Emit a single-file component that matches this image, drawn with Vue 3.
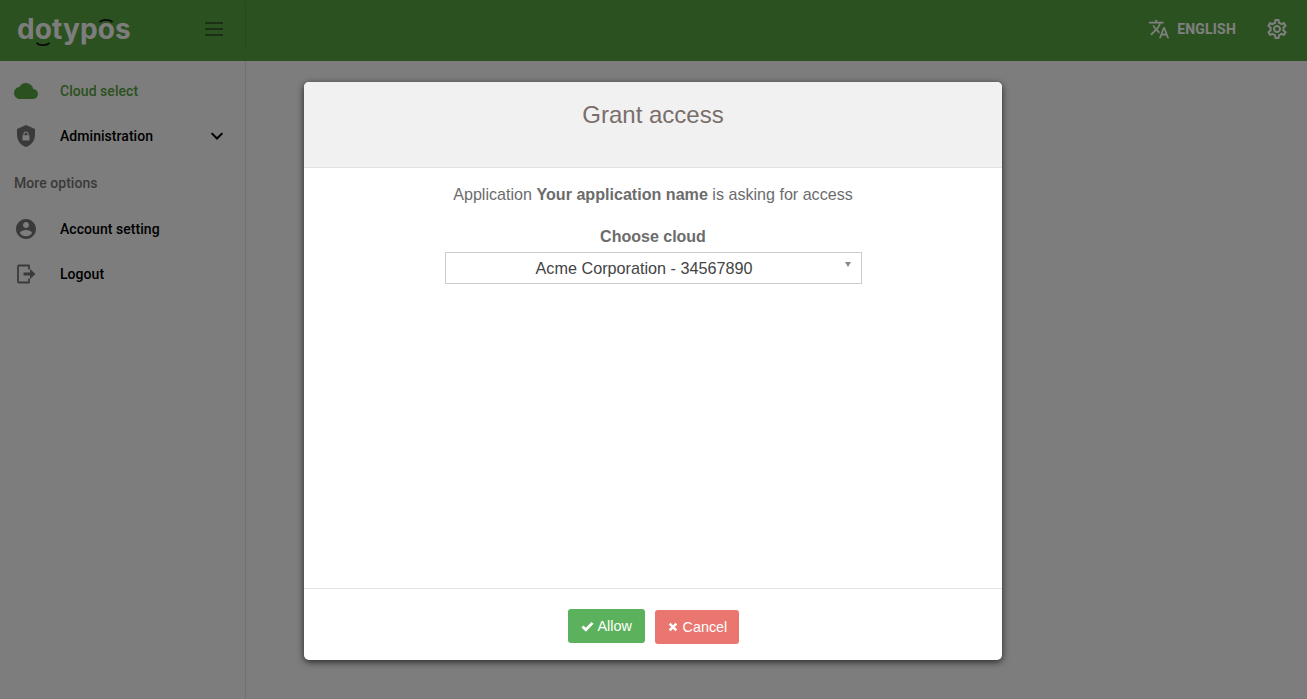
<template>
  <div class="app">
    <header class="topbar">
      <div class="brand">
        <span class="logo">d<span class="o low">o<svg viewBox="0 0 14 5" width="14" height="5"><path fill="none" stroke="#111" stroke-width="1.7" d="M.5 .8C3 4 11 4 13.500 .8"/></svg></span>typ<span class="o high">o<svg viewBox="0 0 14 5" width="14" height="5"><path fill="none" stroke="#111" stroke-width="1.7" d="M.5 4.200C3 1 11 1 13.500 4.200"/></svg></span>s</span>
      </div>
      <button class="menu" aria-label="menu"><span></span><span></span><span></span></button>
      <div class="divider"></div>
      <div class="spacer"></div>
      <div class="lang">
        <svg viewBox="0 0 24 24" width="22" height="22"><path fill="currentColor" d="M12.87 15.07l-2.54-2.51.03-.03A17.52 17.52 0 0 0 14.07 6H17V4h-7V2H8v2H1v2h11.17C11.5 7.92 10.44 9.75 9 11.35 8.07 10.32 7.3 9.19 6.69 8h-2c.73 1.63 1.73 3.17 2.98 4.56l-5.09 5.02L4 19l5-5 3.11 3.11.76-2.04zM18.5 10h-2L12 22h2l1.12-3h4.75L21 22h2l-4.5-12zm-2.62 7l1.62-4.33L19.12 17h-3.24z"/></svg>
        <span>ENGLISH</span>
      </div>
      <svg class="gear" viewBox="0 0 24 24" width="24" height="24"><path fill="currentColor" d="M19.43 12.98c.04-.32.07-.64.07-.98s-.03-.66-.07-.98l2.11-1.65c.19-.15.24-.42.12-.64l-2-3.46c-.12-.22-.39-.3-.61-.22l-2.49 1c-.52-.4-1.08-.73-1.69-.98l-.38-2.65A.488.488 0 0 0 14 2h-4c-.25 0-.46.18-.49.42l-.38 2.65c-.61.25-1.17.59-1.69.98l-2.49-1a.566.566 0 0 0-.18-.03c-.17 0-.34.09-.43.25l-2 3.46c-.13.22-.07.49.12.64l2.11 1.65c-.04.32-.07.65-.07.98s.03.66.07.98l-2.11 1.65c-.19.15-.24.42-.12.64l2 3.46c.12.22.39.3.61.22l2.49-1c.52.4 1.08.73 1.69.98l.38 2.65c.03.24.24.42.49.42h4c.25 0 .46-.18.49-.42l.38-2.65c.61-.25 1.17-.59 1.69-.98l2.49 1c.06.02.12.03.18.03.17 0 .34-.09.43-.25l2-3.46c.12-.22.07-.49-.12-.64l-2.11-1.65zm-1.98-1.71c.04.31.05.52.05.73 0 .21-.02.43-.05.73l-.14 1.13.89.7 1.08.84-.7 1.21-1.27-.51-1.04-.42-.9.68c-.43.32-.84.56-1.25.73l-1.06.43-.16 1.13-.2 1.35h-1.4l-.19-1.35-.16-1.13-1.06-.43c-.43-.18-.83-.41-1.23-.71l-.91-.7-1.06.43-1.27.51-.7-1.21 1.08-.84.89-.7-.14-1.13c-.03-.31-.05-.54-.05-.74s.02-.43.05-.73l.14-1.13-.89-.7-1.08-.84.7-1.21 1.27.51 1.04.42.9-.68c.43-.32.84-.56 1.25-.73l1.06-.43.16-1.13.2-1.35h1.39l.19 1.35.16 1.13 1.06.43c.43.18.83.41 1.23.71l.91.7 1.06-.43 1.27-.51.7 1.21-1.07.85-.89.7.14 1.13zM12 8c-2.21 0-4 1.79-4 4s1.79 4 4 4 4-1.79 4-4-1.79-4-4-4zm0 6c-1.1 0-2-.9-2-2s.9-2 2-2 2 .9 2 2-.9 2-2 2z"/></svg>
    </header>

    <div class="body">
      <aside class="sidebar">
        <div class="item active">
          <svg viewBox="0 0 24 24" class="ico cloud"><path fill="currentColor" d="M19.35 10.04A7.49 7.49 0 0 0 12 4C9.11 4 6.6 5.64 5.35 8.04A5.994 5.994 0 0 0 0 14c0 3.31 2.69 6 6 6h13c2.76 0 5-2.24 5-5 0-2.64-2.05-4.78-4.65-4.96z"/></svg>
          <span>Cloud select</span>
        </div>
        <div class="item">
          <svg viewBox="0 0 24 24" class="ico"><path fill="currentColor" fill-rule="evenodd" d="M12 1L3 5v6c0 5.550 3.840 10.740 9 12 5.160-1.260 9-6.450 9-12V5l-9-4zm3.500 15.500h-7v-5.200h.9v-1.200a2.600 2.600 0 0 1 5.200 0v1.200h.9v5.200zm-2-5.200v-1.200a1.500 1.500 0 0 0-3 0v1.200h3z"/></svg>
          <span>Administration</span>
          <svg class="chev" viewBox="0 0 24 24" width="20" height="20"><path fill="none" stroke="currentColor" stroke-width="2.4" d="M5.500 8.500l6.500 6.500 6.500-6.500"/></svg>
        </div>
        <div class="section">More options</div>
        <div class="item">
          <svg viewBox="0 0 24 24" class="ico"><path fill="currentColor" d="M12 2C6.480 2 2 6.480 2 12s4.480 10 10 10 10-4.480 10-10S17.520 2 12 2zm0 3c1.660 0 3 1.340 3 3s-1.340 3-3 3-3-1.340-3-3 1.340-3 3-3zm0 14.200a7.200 7.200 0 0 1-6-3.220c.03-1.990 4-3.080 6-3.080s5.970 1.090 6 3.080a7.200 7.200 0 0 1-6 3.220z"/></svg>
          <span>Account setting</span>
        </div>
        <div class="item">
          <svg viewBox="0 0 24 24" class="ico"><path fill="none" stroke="currentColor" stroke-width="1.800" stroke-linejoin="round" d="M15 7.500V3.500H5a1 1 0 0 0-1 1v15a1 1 0 0 0 1 1h10v-4"/><path fill="currentColor" d="M9.500 10.500H16V7l5.500 5-5.500 5v-3.500H9.500z"/></svg>
          <span>Logout</span>
        </div>
      </aside>
      <main class="content"></main>
    </div>

    <div class="backdrop">
      <section class="modal">
        <div class="modal-head"><h1>Grant access</h1></div>
        <div class="modal-body">
          <p class="intro">Application <b>Your application name</b> is asking for access</p>
          <div class="label">Choose cloud</div>
          <div class="select">Acme Corporation - 34567890<i class="caret"></i></div>
        </div>
        <div class="modal-foot">
          <button class="btn allow">
            <svg viewBox="0 0 14 12" width="13" height="11"><path fill="none" stroke="currentColor" stroke-width="3" d="M1.500 6l3.700 3.600L12.500 2"/></svg>
            Allow
          </button>
          <button class="btn cancel">
            <svg viewBox="0 0 12 12" width="10" height="10"><path fill="none" stroke="currentColor" stroke-width="3" d="M2 2l8 8M10 2l-8 8"/></svg>
            Cancel
          </button>
        </div>
      </section>
    </div>
  </div>
</template>

<script setup>
</script>

<style>
html, body { margin: 0; height: 100%; overflow: hidden; }
</style>

<style scoped>
.app { position: relative; width: 1307px; height: 699px; overflow: hidden; background: #fafafa; font-family: Roboto, sans-serif; }
.topbar { height: 61px; background: #56a240; color: #fff; display: flex; align-items: center; box-sizing: border-box; padding-bottom: 4px; }
.brand { width: 205px; padding-left: 17px; box-sizing: border-box; flex: none; }
.logo { font-family: Inter, sans-serif; font-weight: 700; font-size: 28px; letter-spacing: 0.1px; line-height: 36px; display: block; color: #fbfbfb; }
.o { position: relative; }
.o svg { position: absolute; left: 1.500px; }
.o.low svg { top: 30px; }
.o.high svg { top: 6px; }
.menu { width: 18px; height: 14px; padding: 0; border: 0; background: none; display: flex; flex-direction: column; justify-content: space-between; flex: none; }
.menu span { display: block; width: 18px; height: 2px; background: #111; opacity: .45; }
.divider { width: 1px; height: 48px; margin: -6px 0 0 22px; background: rgba(0,0,0,.08); flex: none; }
.spacer { flex: 1; }
.lang { display: flex; align-items: center; gap: 7px; font-size: 14px; font-weight: 700; letter-spacing: .2px; margin-right: 29px; }
.gear { margin-right: 18px; }
.body { display: flex; height: 638px; }
.sidebar { width: 246px; flex: none; box-sizing: border-box; border-right: 1px solid rgba(0,0,0,.1); padding-top: 7px; }
.item { height: 45px; display: flex; align-items: center; font-size: 14px; font-weight: 500; letter-spacing: .05px; color: #000; padding-left: 14px; box-sizing: border-box; position: relative; }
.ico { width: 24px; height: 24px; margin-right: 22px; color: #757575; flex: none; }
.ico.cloud { color: #56a240; }
.item.active { color: #56a240; }
.chev { position: absolute; left: 207px; top: 13px; color: #000; }
.section { font-size: 14px; font-weight: 500; letter-spacing: .05px; color: #757575; padding-left: 14px; height: 48px; line-height: 50px; }
.content { flex: 1; }
.backdrop { position: absolute; inset: 0; background: rgba(0,0,0,.5); display: flex; justify-content: center; padding: 82px 1px 0 0; box-sizing: border-box; }
.modal { width: 698px; height: 578px; background: #fff; border-radius: 5px; box-shadow: 0 2px 7px rgba(0,0,0,.7); display: flex; flex-direction: column; font-family: "Liberation Sans", Arial, sans-serif; overflow: hidden; }
.modal-head { height: 86px; background: #f1f1f1; border-bottom: 1px solid #e2e2e2; flex: none; box-sizing: border-box; }
.modal-head h1 { margin: 0; padding-top: 19px; font-size: 24px; line-height: 28px; font-weight: 400; text-align: center; color: #7a6e6b; }
.modal-body { flex: 1; display: flex; flex-direction: column; align-items: center; color: #6c6c6c; }
.intro { margin: 16px 0 0; font-size: 16.100px; line-height: 20px; }
.label { margin-top: 23px; font-size: 16px; line-height: 20px; font-weight: 700; }
.select { position: relative; margin-top: 5px; width: 417px; height: 32px; box-sizing: border-box; border: 1px solid #ccc; padding-right: 18px; text-align: center; font-size: 16.200px; line-height: 30px; color: #444; }
.caret { position: absolute; right: 10px; top: 9px; width: 0; height: 0; border-left: 3.500px solid transparent; border-right: 3.500px solid transparent; border-top: 5px solid #888; }
.modal-foot { height: 72px; flex: none; border-top: 1px solid #e5e5e5; box-sizing: border-box; display: flex; justify-content: center; align-items: flex-start; gap: 10px; padding-top: 20px; }
.btn { height: 34px; border: 0; border-radius: 3px; color: #fff; font-family: inherit; font-size: 14.400px; display: flex; align-items: center; gap: 4px; box-sizing: border-box; }
.allow { background: #5cb25c; width: 77px; padding: 0 0 0 13px; }
.cancel { background: #e97770; width: 84px; margin-top: 1px; padding: 0 0 0 13px; gap: 5px; }
</style>
